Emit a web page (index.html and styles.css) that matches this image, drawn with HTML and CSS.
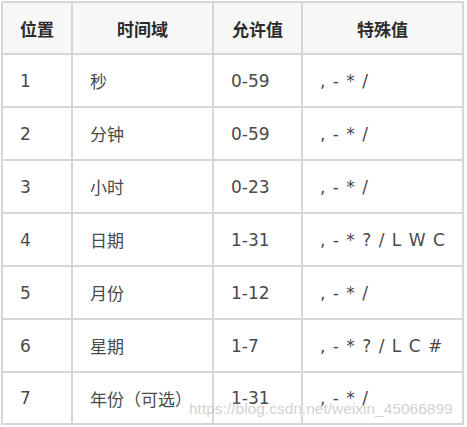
FILE: index.html
```html
<!DOCTYPE html>
<html lang="zh">
<head>
<meta charset="utf-8">
<title>Cron 字段</title>
<link rel="stylesheet" href="styles.css">
</head>
<body>
<div class="page">
  <div class="grid">
    <div class="cell th">位置</div>
    <div class="cell th">时间域</div>
    <div class="cell th">允许值</div>
    <div class="cell th">特殊值</div>

    <div class="cell">1</div>
    <div class="cell">秒</div>
    <div class="cell">0-59</div>
    <div class="cell sym">, - * /</div>

    <div class="cell">2</div>
    <div class="cell">分钟</div>
    <div class="cell">0-59</div>
    <div class="cell sym">, - * /</div>

    <div class="cell">3</div>
    <div class="cell">小时</div>
    <div class="cell">0-23</div>
    <div class="cell sym">, - * /</div>

    <div class="cell">4</div>
    <div class="cell">日期</div>
    <div class="cell">1-31</div>
    <div class="cell sym">, - * ? / L W C</div>

    <div class="cell">5</div>
    <div class="cell">月份</div>
    <div class="cell">1-12</div>
    <div class="cell sym">, - * /</div>

    <div class="cell">6</div>
    <div class="cell">星期</div>
    <div class="cell">1-7</div>
    <div class="cell sym">, - * ? / L C #</div>

    <div class="cell">7</div>
    <div class="cell">年份（可选）</div>
    <div class="cell">1-31</div>
    <div class="cell sym">, - * /</div>
  </div>
  <div class="watermark">https://blog.csdn.net/weixin_45066899</div>
</div>
</body>
</html>
```

FILE: styles.css
```css
html, body {
  margin: 0;
  padding: 0;
  background: #ffffff;
}

.page {
  position: relative;
  width: 467px;
  height: 427px;
  padding: 1px 0 0 1px;
  box-sizing: border-box;
}

.grid {
  display: grid;
  grid-template-columns: 70px 141px 89px 161px;
  grid-template-rows: 52px 53px 53px 53px 53px 53px 53px 52px;
  border-left: 2px solid #d6d6d6;
  border-top: 2px solid #d6d6d6;
  width: max-content;
  font-family: "DejaVu Sans", "Noto Sans CJK SC", sans-serif;
  font-size: 17px;
  color: #4a4a4a;
}

.cell {
  border-right: 2px solid #d6d6d6;
  border-bottom: 2px solid #d6d6d6;
  display: flex;
  align-items: center;
  padding: 0 0 0 17px;
  white-space: nowrap;
}

.th {
  background: #f7f7f7;
  justify-content: center;
  padding: 0;
  font-weight: bold;
  color: #2b2b2b;
}

.sym {
  word-spacing: 2px;
}

.watermark {
  position: absolute;
  left: 189px;
  top: 400px;
  font-family: "Liberation Sans", Arial, sans-serif;
  font-size: 15.5px;
  color: rgba(170, 170, 170, 0.55);
  text-shadow: 1px 1px 0 rgba(255, 255, 255, 0.6);
  white-space: nowrap;
}
```
